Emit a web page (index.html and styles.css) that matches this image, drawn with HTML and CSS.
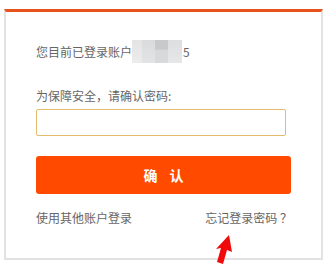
FILE: index.html
```html
<!DOCTYPE html>
<html>
    <head>
        <title>确认密码</title>
        <meta charset="UTF-8"/>
        <meta name="viewport" content="width=device-width, initial-scale=1.0"/>
        <link rel="stylesheet" href="styles.css">
    </head>
    <body>
        <div class="panel">
            <div class="account">
                <span>您目前已登录账户</span>
                <span class="mosaic">
                    <i class="m1"></i><i class="m2"></i><i class="m3"></i><i class="m4"></i>
                </span>
                <span>5</span>
            </div>
            <form name="pwdform" method="post" action="">
                <label class="tip" for="pwd">为保障安全，请确认密码:</label>
                <input type="password" id="pwd" name="pwd" class="pwd" />
                <button type="button" class="ok">确认</button>
            </form>
            <div class="links">
                <a href="#">使用其他账户登录</a>
                <a href="#">忘记登录密码 ？</a>
            </div>
        </div>
        <svg class="arrow" width="24" height="34" viewBox="0 0 24 34">
            <polygon points="19,3 22,20 17,18 13,32 7,30 11,16 6,17" fill="#f00a0a"/>
        </svg>
    </body>
</html>
```

FILE: styles.css
```css
html, body {
    margin: 0;
    overflow: hidden;
}
body {
    font-family: "Noto Sans CJK SC", "Noto Sans", sans-serif;
    font-size: 12px;
    color: #666;
    background: #fff;
}
.panel {
    box-sizing: border-box;
    height: 251px;
    margin: 9px 3px 0 4px;
    padding: 28px 29px 0 30px;
    border: 2px solid #e2e2e2;
    border-top: 3px solid #e8521c;
}
.account {
    display: flex;
    align-items: center;
    height: 23px;
    line-height: 20px;
}
.mosaic {
    display: flex;
    width: 50px;
    height: 23px;
    margin: 0 1px 0 0;
}
.mosaic i {
    display: block;
    height: 100%;
}
.mosaic .m1 { width: 10px; background: linear-gradient(#e4e4e4, #ececec); }
.mosaic .m2 { width: 13px; background: linear-gradient(#d9dbdd, #e3e4e6); }
.mosaic .m3 { width: 13px; background: linear-gradient(#c8c9cb 40%, #d8d9db 45%); }
.mosaic .m4 { width: 14px; background: linear-gradient(#dcdee0, #e6e7e8); }
form {
    margin: 23px 0 0 0;
}
.tip {
    display: block;
    line-height: 20px;
}
.pwd {
    display: block;
    box-sizing: border-box;
    width: 250px;
    height: 27px;
    margin: 3px 0 0 0;
    border: 1px solid #e3bb6c;
    border-radius: 2px;
    outline: none;
}
.ok {
    display: block;
    width: 255px;
    height: 38px;
    margin: 20px 0 0 0;
    padding: 0 0 0 12px;
    border: none;
    border-radius: 3px;
    background: #ff4a00;
    color: #fff;
    font-family: inherit;
    font-size: 14px;
    font-weight: bold;
    letter-spacing: 12px;
}
.links {
    display: flex;
    justify-content: space-between;
    margin-top: 14px;
    line-height: 20px;
}
.links a {
    color: #666;
    text-decoration: none;
}
.arrow {
    position: absolute;
    left: 210px;
    top: 232px;
}
```
